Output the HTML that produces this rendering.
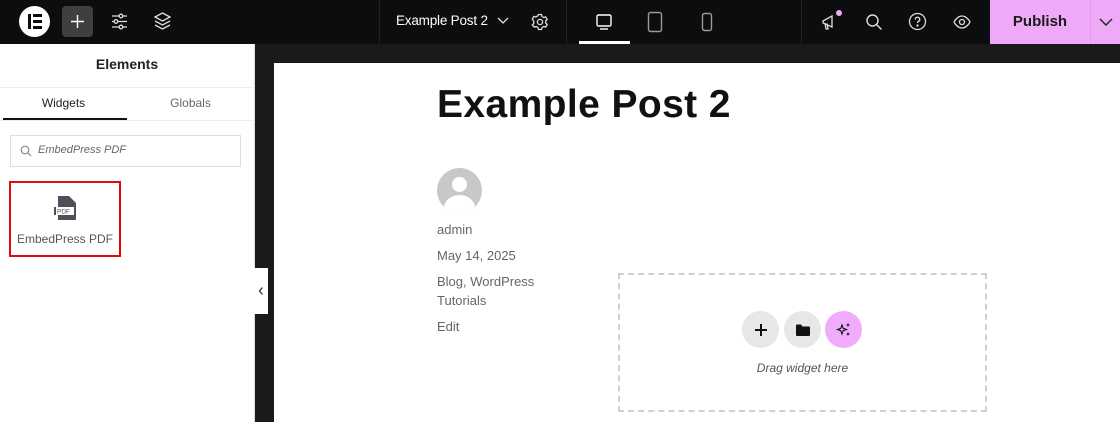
<!DOCTYPE html>
<html><head><style>
*{box-sizing:border-box;margin:0;padding:0}
body{width:1120px;height:422px;overflow:hidden;background:#1a1a1a;font-family:"Liberation Sans",sans-serif;position:relative}
.abs{position:absolute}
#top{left:0;top:0;width:1120px;height:44px;background:#0c0d0e}
#side{left:0;top:44px;width:255px;height:378px;background:#fff;border-right:1px solid #ddd}
#page{left:274px;top:63px;width:846px;height:359px;background:#fff}
.meta{position:absolute;left:437px;font-size:13px;color:#666}
.cb{position:absolute;width:37px;height:37px;border-radius:50%;top:311px;display:flex;align-items:center;justify-content:center}
</style></head><body>
<div id="top" class="abs">
 <div class="abs" style="left:19px;top:6px;width:31px;height:31px;border-radius:50%;background:#fff"></div>
 <div class="abs" style="left:28px;top:14px;width:3px;height:15px;background:#0c0d0e"></div>
 <div class="abs" style="left:33px;top:14px;width:9px;height:3px;background:#0c0d0e"></div>
 <div class="abs" style="left:33px;top:20px;width:9px;height:3px;background:#0c0d0e"></div>
 <div class="abs" style="left:33px;top:26px;width:9px;height:3px;background:#0c0d0e"></div>
 <div class="abs" style="left:62px;top:6px;width:31px;height:31px;border-radius:4px;background:#3f3f41"></div>
 <svg class="abs" style="left:68px;top:12px" width="19" height="19" viewBox="0 0 19 19"><path d="M9.5 3v13M3 9.5h13" stroke="#fff" stroke-width="1.4"/></svg>
 <svg class="abs" style="left:111px;top:13px" width="17" height="17" viewBox="0 0 17 17" fill="none" stroke="#ddd" stroke-width="1.3"><path d="M1 3h15M1 8.5h15M1 14h15"/><circle cx="10" cy="3" r="1.8" fill="#0c0d0e"/><circle cx="5" cy="8.5" r="1.8" fill="#0c0d0e"/><circle cx="10" cy="14" r="1.8" fill="#0c0d0e"/></svg>
 <svg class="abs" style="left:154px;top:12px" width="17" height="18" viewBox="0 0 17 18" fill="none" stroke="#ddd" stroke-width="1.3"><path d="M8.5 1L16 5 8.5 9 1 5z"/><path d="M1 9l7.5 4 7.5-4M1 13l7.5 4 7.5-4"/></svg>
 <div class="abs" style="left:379px;top:0;width:1px;height:44px;background:#222"></div>
 <div class="abs" style="left:396px;top:13px;color:#fff;font-size:13.5px;letter-spacing:-0.2px">Example Post 2</div>
 <svg class="abs" style="left:497px;top:16px" width="12" height="10"><path d="M1 2l5 5 5-5" stroke="#ddd" fill="none" stroke-width="1.3"/></svg>
 <svg class="abs" style="left:531px;top:13px" width="18" height="18" viewBox="0 0 18 18" fill="none" stroke="#ddd" stroke-width="1.3"><circle cx="9" cy="9" r="2.6"/><path d="M7.5 1.5h3l.5 2 1.7 1 2-.6 1.5 2.6-1.5 1.5v2l1.5 1.5-1.5 2.6-2-.6-1.7 1-.5 2h-3l-.5-2-1.7-1-2 .6L1.3 12l1.5-1.5v-2L1.3 6l1.5-2.6 2 .6 1.7-1z"/></svg>
 <div class="abs" style="left:566px;top:0;width:1px;height:44px;background:#222"></div>
 <svg class="abs" style="left:595px;top:13px" width="18" height="18" viewBox="0 0 18 18" fill="none" stroke="#fff" stroke-width="1.4"><rect x="2" y="2" width="14" height="11" rx="1.5"/><path d="M5 16h8"/></svg>
 <div class="abs" style="left:579px;top:41px;width:51px;height:3px;background:#fff"></div>
 <svg class="abs" style="left:647px;top:11px" width="16" height="22" viewBox="0 0 16 22" fill="none" stroke="#999" stroke-width="1.4"><rect x="1.5" y="1.5" width="13" height="19" rx="2"/></svg>
 <svg class="abs" style="left:701px;top:12px" width="12" height="20" viewBox="0 0 12 20" fill="none" stroke="#999" stroke-width="1.4"><rect x="1.5" y="1.5" width="9" height="17" rx="2"/></svg>
 <div class="abs" style="left:801px;top:0;width:1px;height:44px;background:#222"></div>
 <svg class="abs" style="left:821px;top:13px" width="18" height="18" viewBox="0 0 18 18" fill="none" stroke="#ddd" stroke-width="1.3"><path d="M2 8l9-5v11L2 10z"/><path d="M4 10l1 6h2l-1-5.5"/></svg>
 <div class="abs" style="left:836px;top:10px;width:6px;height:6px;border-radius:50%;background:#f0abfc"></div>
 <svg class="abs" style="left:865px;top:13px" width="18" height="18" viewBox="0 0 18 18" fill="none" stroke="#ddd" stroke-width="1.4"><circle cx="7.5" cy="7.5" r="5.5"/><path d="M11.5 11.5l5 5"/></svg>
 <svg class="abs" style="left:908px;top:12px" width="19" height="19" viewBox="0 0 19 19" fill="none" stroke="#ddd" stroke-width="1.3"><circle cx="9.5" cy="9.5" r="8"/><path d="M7.3 7.5a2.2 2.2 0 1 1 3 2c-.6.3-.8.7-.8 1.5"/><circle cx="9.5" cy="13.5" r=".5" fill="#ddd"/></svg>
 <svg class="abs" style="left:953px;top:14px" width="18" height="16" viewBox="0 0 18 16" fill="none" stroke="#ddd" stroke-width="1.3"><path d="M1 8s3-6 8-6 8 6 8 6-3 6-8 6-8-6-8-6z"/><circle cx="9" cy="8" r="2.5"/></svg>
 <div class="abs" style="left:990px;top:0;width:100px;height:44px;background:#efaaf7;color:#1a1a1a;font-size:15px;font-weight:bold;text-align:center;line-height:44px">Publish</div>
 <div class="abs" style="left:1090px;top:0;width:30px;height:44px;background:#efaaf7;border-left:1px solid #e59cec"></div>
 <svg class="abs" style="left:1099px;top:17px" width="14" height="10"><path d="M1 2l6 6 6-6" stroke="#222" fill="none" stroke-width="1.4"/></svg>
</div>
<div id="side" class="abs">
 <div class="abs" style="left:0;top:12px;width:254px;text-align:center;font-size:14px;font-weight:bold;color:#222">Elements</div>
 <div class="abs" style="left:0;top:43px;width:254px;height:1px;background:#eee"></div>
 <div class="abs" style="left:0;top:52px;width:127px;text-align:center;font-size:12px;color:#222">Widgets</div>
 <div class="abs" style="left:127px;top:52px;width:127px;text-align:center;font-size:12px;color:#666">Globals</div>
 <div class="abs" style="left:3px;top:74px;width:124px;height:2px;background:#111"></div>
 <div class="abs" style="left:0;top:76px;width:254px;height:1px;background:#eee"></div>
 <div class="abs" style="left:10px;top:91px;width:231px;height:32px;border:1px solid #ddd"></div>
 <svg class="abs" style="left:20px;top:101px" width="12" height="12" viewBox="0 0 12 12" fill="none" stroke="#888" stroke-width="1.2"><circle cx="5" cy="5" r="3.8"/><path d="M8 8l3 3"/></svg>
 <div class="abs" style="left:38px;top:100px;font-size:11px;font-style:italic;color:#666">EmbedPress PDF</div>
 <div class="abs" style="left:9px;top:137px;width:112px;height:76px;border:2px solid #e6090c"></div>
 <svg class="abs" style="left:53px;top:151px" width="26" height="26" viewBox="0 0 26 26"><path d="M5 1h11l7 7v16a1 1 0 0 1-1 1H5z" fill="#4e5058"/><rect x="3" y="12" width="18" height="8" fill="#fff"/><rect x="1" y="12" width="2" height="8" fill="#4e5058"/><text x="4" y="18.5" font-size="6.5" font-family="Liberation Sans" fill="#4e5058">PDF</text></svg>
 <div class="abs" style="left:9px;top:188px;width:112px;text-align:center;font-size:12px;color:#555">EmbedPress PDF</div>
</div>
<div class="abs" style="left:254px;top:268px;width:14px;height:46px;background:#fff"></div>
<svg class="abs" style="left:257px;top:286px" width="8" height="10"><path d="M5.5 1.5L2.5 5l3 3.5" stroke="#333" fill="none" stroke-width="1.3"/></svg>
<div id="page" class="abs"></div>
<div class="abs" style="left:437px;top:83px;font-size:39px;font-weight:bold;color:#111;letter-spacing:0.4px">Example Post 2</div>
<div class="abs" style="left:437px;top:168px;width:45px;height:45px;border-radius:50%;background:#c8c8c8;overflow:hidden">
 <div class="abs" style="left:15px;top:9px;width:15px;height:15px;border-radius:50%;background:#fff"></div>
 <div class="abs" style="left:7px;top:27px;width:31px;height:26px;border-radius:50%;background:#fff"></div>
</div>
<div class="meta" style="top:222px">admin</div>
<div class="meta" style="top:248px">May 14, 2025</div>
<div class="meta" style="top:274px">Blog, WordPress</div>
<div class="meta" style="top:293px">Tutorials</div>
<div class="meta" style="top:319px">Edit</div>
<div class="abs" style="left:618px;top:273px;width:369px;height:139px;border:2px dashed #d0d0d0"></div>
<div class="cb" style="left:742px;background:#e6e7e9"><svg width="14" height="14"><path d="M7 1v12M1 7h12" stroke="#111" stroke-width="2"/></svg></div>
<div class="cb" style="left:784px;background:#e6e7e9"><svg width="14" height="12"><path d="M0 1.5a1 1 0 0 1 1-1h4l1.5 2H13a1 1 0 0 1 1 1V11a1 1 0 0 1-1 1H1a1 1 0 0 1-1-1z" fill="#111"/></svg></div>
<div class="cb" style="left:825px;background:#f0abfc"><svg width="16" height="16" viewBox="0 0 16 16" fill="#111"><path d="M6 3l1.2 3.3L10.5 7.5 7.2 8.7 6 12 4.8 8.7 1.5 7.5 4.8 6.3z" fill="none" stroke="#111" stroke-width="1.1"/><path d="M12 1l.6 1.4L14 3l-1.4.6L12 5l-.6-1.4L10 3l1.4-.6zM12 10l.6 1.4 1.4.6-1.4.6L12 14l-.6-1.4L10 12l1.4-.6z"/></svg></div>
<div class="abs" style="left:618px;top:361px;width:369px;text-align:center;font-size:12px;font-style:italic;color:#555">Drag widget here</div>
</body></html>
